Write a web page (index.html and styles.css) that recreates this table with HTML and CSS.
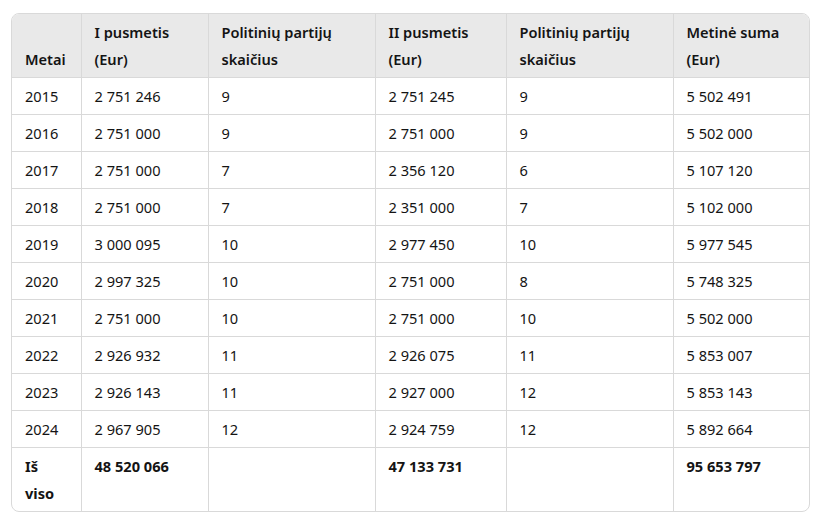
FILE: index.html
```html
<!DOCTYPE html>
<html lang="lt">
<head>
<meta charset="utf-8">
<link rel="stylesheet" href="styles.css">
</head>
<body>
<div class="table-wrap">
<table class="data">
<colgroup>
<col class="c1"><col class="c2"><col class="c3"><col class="c4"><col class="c5"><col class="c6">
</colgroup>
<thead>
<tr><th>Metai</th><th>I pusmetis (Eur)</th><th>Politinių partijų skaičius</th><th>II pusmetis (Eur)</th><th>Politinių partijų skaičius</th><th>Metinė suma (Eur)</th></tr>
</thead>
<tbody>
<tr><td>2015</td><td>2 751 246</td><td>9</td><td>2 751 245</td><td>9</td><td>5 502 491</td></tr>
<tr><td>2016</td><td>2 751 000</td><td>9</td><td>2 751 000</td><td>9</td><td>5 502 000</td></tr>
<tr><td>2017</td><td>2 751 000</td><td>7</td><td>2 356 120</td><td>6</td><td>5 107 120</td></tr>
<tr><td>2018</td><td>2 751 000</td><td>7</td><td>2 351 000</td><td>7</td><td>5 102 000</td></tr>
<tr><td>2019</td><td>3 000 095</td><td>10</td><td>2 977 450</td><td>10</td><td>5 977 545</td></tr>
<tr><td>2020</td><td>2 997 325</td><td>10</td><td>2 751 000</td><td>8</td><td>5 748 325</td></tr>
<tr><td>2021</td><td>2 751 000</td><td>10</td><td>2 751 000</td><td>10</td><td>5 502 000</td></tr>
<tr><td>2022</td><td>2 926 932</td><td>11</td><td>2 926 075</td><td>11</td><td>5 853 007</td></tr>
<tr><td>2023</td><td>2 926 143</td><td>11</td><td>2 927 000</td><td>12</td><td>5 853 143</td></tr>
<tr><td>2024</td><td>2 967 905</td><td>12</td><td>2 924 759</td><td>12</td><td>5 892 664</td></tr>
<tr class="total"><td>Iš viso</td><td>48 520 066</td><td></td><td>47 133 731</td><td></td><td>95 653 797</td></tr>
</tbody>
</table>
</div>
</body>
</html>
```
FILE: styles.css
```css
html, body {
  margin: 0;
  padding: 0;
  background: #ffffff;
}
body {
  padding: 13px 7px 0 11px;
  font-family: "Noto Sans", "Open Sans", sans-serif;
  font-size: 14.6px;
  color: #141414;
}
.table-wrap {
  width: 797px;
  border: 1px solid #d9d9d9;
  border-radius: 8px;
  overflow: hidden;
}
.data {
  width: 100%;
  table-layout: fixed;
  border-collapse: collapse;
}
.c1 { width: 69px; }
.c2 { width: 127px; }
.c3 { width: 167px; }
.c4 { width: 131px; }
.c5 { width: 167px; }
.c6 { width: 136px; }
.data th,
.data td {
  text-align: left;
  line-height: 27px;
  padding: 5px 10px 4px 13px;
  border-right: 1px solid #d9d9d9;
  border-bottom: 1px solid #d9d9d9;
  vertical-align: top;
}
.data th:last-child,
.data td:last-child {
  border-right: none;
}
.data tbody tr:last-child td {
  border-bottom: none;
}
.data th {
  background: #e9e9e9;
  font-weight: 600;
  vertical-align: bottom;
}
.data td {
  font-weight: 400;
}
.data .total td {
  font-weight: 700;
}
```
